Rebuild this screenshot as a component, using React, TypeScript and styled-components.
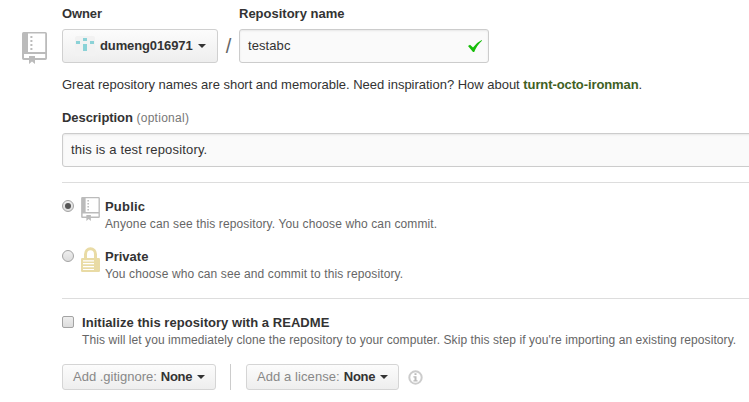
import React from "react";
import styled, { createGlobalStyle } from "styled-components";

const GlobalStyle = createGlobalStyle`
  *, *::before, *::after { box-sizing: border-box; }
  body {
    margin: 0;
    overflow: hidden;
    background: #fff;
    color: #333;
    font: 13px/18px "Liberation Sans", Arial, sans-serif;
  }
  svg { display: block; flex: none; }
`;

const Page = styled.form`
  display: flex;
  width: 749px;
  height: 402px;
  padding-top: 5px;
  overflow: hidden;
  background: #fff;
`;

const Gutter = styled.div`
  flex: 0 0 62px;
  padding: 27px 0 0 22px;
`;

const Fields = styled.div`
  flex: 1;
  min-width: 0;
`;

const NameRow = styled.div`
  display: flex;
  align-items: flex-end;
`;

const Field = styled.div<{ $width: number }>`
  width: ${(p) => p.$width}px;
`;

const Text = styled.span<{ $track?: number }>`
  letter-spacing: ${(p) => p.$track ?? 0}px;
  white-space: nowrap;
`;

const Label = styled.label<{ $track?: number }>`
  display: block;
  height: 18px;
  font-weight: bold;
  letter-spacing: ${(p) => p.$track ?? 0}px;
  white-space: nowrap;
`;

const Optional = styled.span`
  color: #777;
  font-size: 12px;
  font-weight: normal;
  letter-spacing: 0.28px;
`;

const OwnerButton = styled.button`
  display: flex;
  align-items: center;
  width: 156px;
  height: 34px;
  margin-top: 6px;
  padding: 0 0 0 12px;
  border: 1px solid #d0d0d0;
  border-radius: 3px;
  background: linear-gradient(#fcfcfc, #eee);
  color: #333;
  font: bold 13px/18px "Liberation Sans", Arial, sans-serif;
`;

const OwnerName = styled(Text)`
  margin-left: 5px;
`;

const Slash = styled.span`
  width: 21px;
  height: 34px;
  color: #666;
  font-size: 20px;
  line-height: 35px;
  text-align: center;
`;

const InputBox = styled.div<{ $bleed?: boolean }>`
  display: flex;
  align-items: center;
  justify-content: space-between;
  height: 34px;
  margin-top: 6px;
  margin-right: ${(p) => (p.$bleed ? "-5px" : "0")};
  padding: 0 6px 0 8px;
  border: 1px solid #ccc;
  border-radius: 3px;
  background: #fafafa;
  box-shadow: inset 0 1px 2px rgba(0, 0, 0, 0.075);
`;

const Hint = styled.p`
  margin: 13px 0 15px;
  height: 18px;
  white-space: nowrap;
`;

const Suggestion = styled.strong<{ $track?: number }>`
  color: #40601f;
  letter-spacing: ${(p) => p.$track ?? 0}px;
`;

const Divider = styled.hr<{ $top: number }>`
  height: 1px;
  margin: ${(p) => p.$top}px 0 0;
  border: 0;
  background: #ddd;
`;

const Choice = styled.div<{ $top: number }>`
  display: flex;
  align-items: flex-start;
  height: 35px;
  margin-top: ${(p) => p.$top}px;
`;

const ChoiceBody = styled.div`
  padding-top: 1px;
`;

const Radio = styled.span<{ $checked?: boolean }>`
  display: grid;
  place-items: center;
  width: 12px;
  height: 12px;
  margin: 3px 7px 0 0;
  border: 1px solid #a3a3a3;
  border-radius: 50%;
  background: linear-gradient(#eee, #dcdcdc);
  &::after {
    content: "";
    width: 6px;
    height: 6px;
    border-radius: 50%;
    background: ${(p) => (p.$checked ? "#555" : "transparent")};
  }
`;

const Checkbox = styled.span`
  width: 12px;
  height: 12px;
  margin: 3px 8px 0 0;
  border: 1px solid #a3a3a3;
  border-radius: 2px;
  background: linear-gradient(#eee, #dcdcdc);
`;

const IconSlot = styled.span`
  width: 24px;
`;

const Note = styled.p<{ $track?: number }>`
  margin: 0;
  height: 17px;
  color: #666;
  font-size: 12px;
  line-height: 17px;
  letter-spacing: ${(p) => p.$track ?? 0}px;
  white-space: nowrap;
`;

const Options = styled.div`
  display: flex;
  align-items: center;
  height: 26px;
  margin-top: 16px;
`;

const SelectButton = styled.button<{ $width: number }>`
  display: flex;
  align-items: center;
  width: ${(p) => p.$width}px;
  height: 26px;
  padding: 0 0 0 10px;
  border: 1px solid #d5d5d5;
  border-radius: 3px;
  background: linear-gradient(#fcfcfc, #eee);
  color: #888;
  font: 13px/18px "Liberation Sans", Arial, sans-serif;
`;

const Selected = styled.b`
  margin-left: 4px;
  color: #333;
  letter-spacing: -0.3px;
`;

const Caret = styled.span`
  margin-left: 5px;
  border: 4px solid transparent;
  border-top-color: #333;
  border-bottom-width: 0;
`;

const Separator = styled.span`
  width: 1px;
  height: 26px;
  margin: 0 15px 0 14px;
  background: #ccc;
`;

const InfoSlot = styled.span`
  margin-left: 9px;
`;

const RepoIcon = ({ width, height }: { width: number; height: number }) => (
  <svg width={width} height={height} viewBox="0 0 25 32">
    <path
      fill="#bbb"
      fillRule="evenodd"
      d="M1.5 0h21.8Q25 0 25 1.7v24.6q0 1.7-1.7 1.7H13v4l-3-2.6L7 32v-4H1.7Q0 28 0 26.3V1.7Q0 0 1.5 0zM6 1.6V20h17.2V1.6zM2 22v4h5v-2h6v2h10.2v-4z"
    />
    <path fill="#bbb" d="M8.4 4h2v2h-2zM8.4 8h2v2h-2zM8.4 12h2v2h-2zM8.4 16h2v2h-2z" />
  </svg>
);

const LockIcon = () => (
  <svg width="19" height="25" viewBox="0 0 19 25">
    <path fill="none" stroke="#e9dba5" strokeWidth="3" d="M4.5 12V7.2a5 5.5 0 0 1 10 0V12" />
    <rect y="11" width="19" height="14" rx="1.2" fill="#e9dba5" />
    <path fill="#fff" d="M2 13.2h11v1.2H2zM2 16.1h11v1.2H2zM2 19h11v1.2H2zM2 21.9h11v1.2H2z" />
  </svg>
);

const Avatar = () => (
  <svg width="20" height="20" viewBox="0 0 20 20">
    <rect width="20" height="20" rx="2" fill="#f2f2f2" />
    <path fill="#8bd2d7" d="M8 2h4v3H8zM1 5h4v3H1zM15 5h4v3h-4zM8 8h4v7H8z" />
  </svg>
);

const Check = () => (
  <svg width="14" height="12" viewBox="0 0 14 12">
    <path fill="#16bd09" d="M0 6l2-1.3 3 2.8Q9 2.2 13.7 0L14 .7Q9 5 6.2 12H5z" />
  </svg>
);

const InfoIcon = () => (
  <svg width="15" height="15" viewBox="0 0 15 15">
    <circle cx="7.5" cy="7.5" r="6.2" fill="none" stroke="#ccc" strokeWidth="2" />
    <path fill="#bbb" d="M6.5 3.3h2v1.8h-2zM5.4 6.2h3.1v4h1.1v1.2H5.4v-1.2h1.1V7.4H5.4z" />
  </svg>
);

export default function App() {
  return (
    <>
      <GlobalStyle />
      <Page>
        <Gutter>
          <RepoIcon width={25} height={32} />
        </Gutter>
        <Fields>
          <NameRow>
            <Field $width={156}>
              <Label $track={-0.1}>Owner</Label>
              <OwnerButton type="button">
                <Avatar />
                <OwnerName $track={-0.12}>dumeng016971</OwnerName>
                <Caret />
              </OwnerButton>
            </Field>
            <Slash>/</Slash>
            <Field $width={250}>
              <Label>Repository name</Label>
              <InputBox>
                <Text $track={0.08}>testabc</Text>
                <Check />
              </InputBox>
            </Field>
          </NameRow>
          <Hint>
            <Text $track={-0.015}>
              Great repository names are short and memorable. Need inspiration? How about{" "}
              <Suggestion $track={-0.1}>turnt-octo-ironman</Suggestion>.
            </Text>
          </Hint>
          <Label $track={-0.06}>
            Description <Optional>(optional)</Optional>
          </Label>
          <InputBox $bleed>
            <Text $track={0.17}>this is a test repository.</Text>
          </InputBox>
          <Divider $top={15} />
          <Choice $top={14}>
            <Radio $checked />
            <IconSlot>
              <RepoIcon width={19} height={24} />
            </IconSlot>
            <ChoiceBody>
              <Label $track={0.2}>Public</Label>
              <Note $track={0.12}>Anyone can see this repository. You choose who can commit.</Note>
            </ChoiceBody>
          </Choice>
          <Choice $top={15}>
            <Radio />
            <IconSlot>
              <LockIcon />
            </IconSlot>
            <ChoiceBody>
              <Label>Private</Label>
              <Note $track={0.115}>You choose who can see and commit to this repository.</Note>
            </ChoiceBody>
          </Choice>
          <Divider $top={16} />
          <Choice $top={14}>
            <Checkbox />
            <ChoiceBody>
              <Label $track={0.045}>Initialize this repository with a README</Label>
              <Note $track={0.078}>
                This will let you immediately clone the repository to your computer. Skip this step if you're importing an existing repository.
              </Note>
            </ChoiceBody>
          </Choice>
          <Options>
            <SelectButton type="button" $width={154}>
              <Text>Add .gitignore:</Text>
              <Selected>None</Selected>
              <Caret />
            </SelectButton>
            <Separator />
            <SelectButton type="button" $width={153}>
              <Text $track={0.08}>Add a license:</Text>
              <Selected>None</Selected>
              <Caret />
            </SelectButton>
            <InfoSlot>
              <InfoIcon />
            </InfoSlot>
          </Options>
        </Fields>
      </Page>
    </>
  );
}
